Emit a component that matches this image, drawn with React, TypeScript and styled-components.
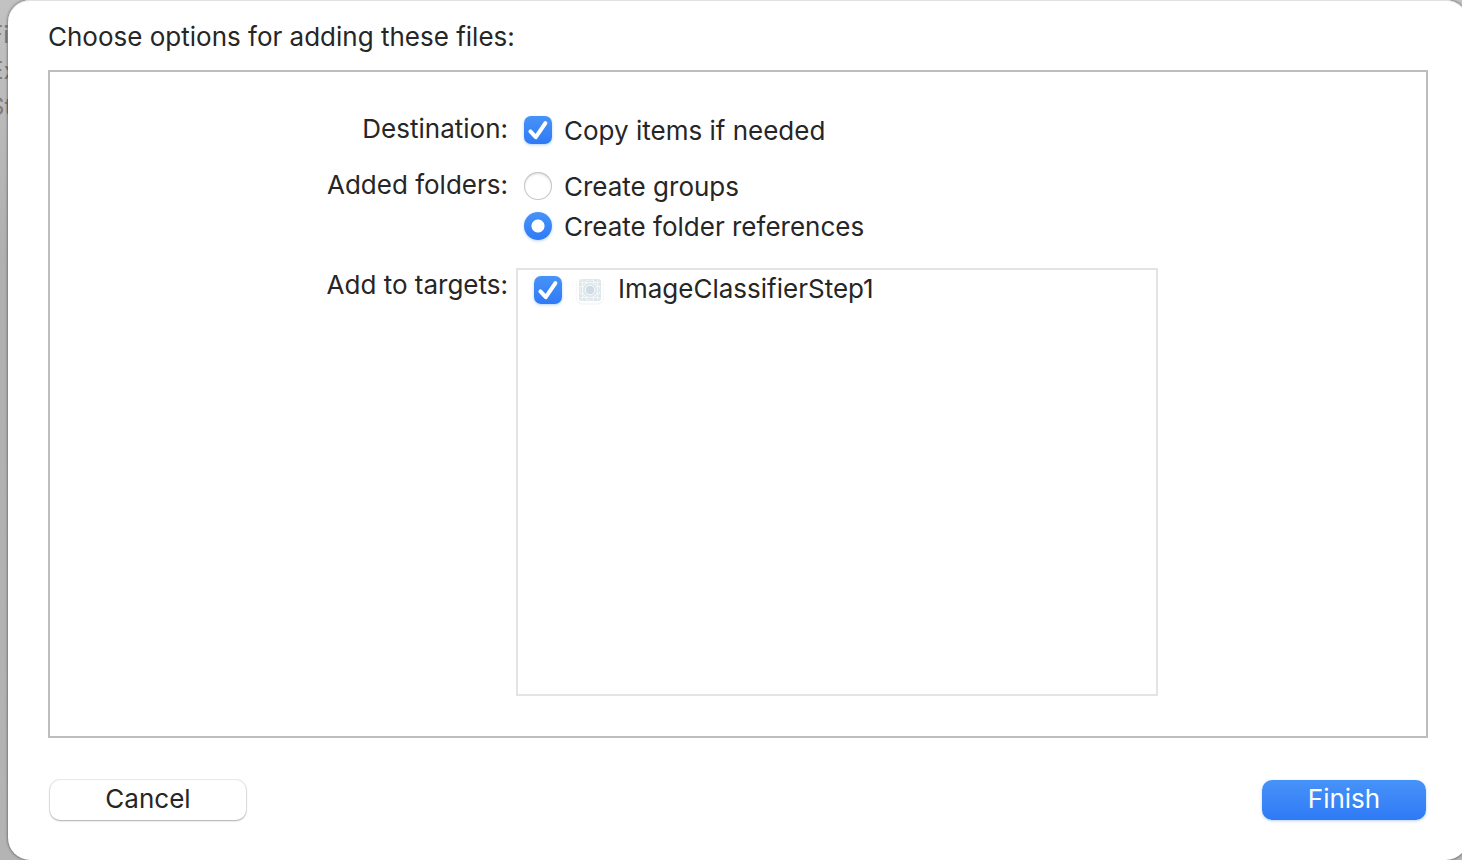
import React, { useState } from "react";
import styled, { createGlobalStyle, css } from "styled-components";

const GlobalStyle = createGlobalStyle`
  *, *::before, *::after { box-sizing: border-box; }
  body {
    margin: 0;
    background: #b4b4b4;
    color: #262626;
    font-family: Inter, "Liberation Sans", sans-serif;
    font-size: 26px;
    line-height: 32px;
  }
`;

const Screen = styled.div`
  position: relative;
  display: flex;
  min-height: 100vh;
  overflow: hidden;
  background: linear-gradient(#c2c2c2, #b0b0b0 30%, #b4b4b4);
`;

const Backdrop = styled.div`
  position: absolute;
  top: 19px;
  left: -11px;
  display: grid;
  gap: 4px;
  color: #7c7c7c;
  font-size: 24px;
`;

const Sheet = styled.form`
  position: relative;
  flex: 1;
  display: flex;
  flex-direction: column;
  margin: 0 -6px 0 8px;
  padding: 22px 40px 40px;
  border-radius: 22px;
  background: #fff;
  box-shadow: inset 0 1px 0 #e2e2e2, 0 0 3px rgba(0, 0, 0, 0.65);
`;

const Title = styled.h1`
  margin: 0 0 18px;
  font-size: 26px;
  font-weight: 400;
  line-height: 30px;
`;

const Panel = styled.div`
  flex: 1;
  display: grid;
  grid-template-columns: 458px minmax(0, 1fr);
  grid-template-rows: auto auto 1fr;
  row-gap: 24px;
  padding: 42px 268px 40px 0;
  border: 2px solid #bdbdbd;
`;

const RowLabel = styled.div<{ $list?: boolean }>`
  padding-top: ${(p) => (p.$list ? 4 : 0)}px;
  line-height: 30px;
  text-align: right;
`;

const Options = styled.div`
  display: grid;
  gap: 8px;
  padding-left: 16px;
`;

const Option = styled.label`
  display: flex;
  align-items: center;
  gap: 12px;
`;

const OptionText = styled.span`
  padding-top: 2px;
  line-height: 30px;
`;

const TargetName = styled.span`
  padding-bottom: 2px;
  line-height: 30px;
`;

const blueFill = css`
  background: linear-gradient(#4793f8, #2f7af5);
  box-shadow: 0 1px 3px rgba(47, 122, 245, 0.35);
`;

const CheckFrame = styled.span`
  display: grid;
  flex: none;
  width: 28px;
  height: 28px;

  & > * {
    grid-area: 1 / 1;
  }
`;

const CheckInput = styled.input`
  appearance: none;
  width: 28px;
  height: 28px;
  margin: 0;
  border-radius: 7px;
  background: #fff;
  box-shadow: inset 0 0 1px 1px #c8c8c8;

  &:checked {
    ${blueFill}
  }
  &:not(:checked) + svg {
    visibility: hidden;
  }
`;

const CheckMark = styled.svg`
  width: 28px;
  height: 28px;
  pointer-events: none;
`;

const Radio = styled.input`
  appearance: none;
  flex: none;
  width: 28px;
  height: 28px;
  margin: 0;
  border-radius: 50%;
  background: #fff;
  box-shadow: inset 0 0 0 1px #c6c6c6, inset 0 2px 3px rgba(0, 0, 0, 0.14);

  &:checked {
    background: radial-gradient(circle, #fff 0 6px, transparent 7px),
      linear-gradient(#4793f8, #2f7af5);
    box-shadow: 0 1px 3px rgba(47, 122, 245, 0.35);
  }
`;

const TargetList = styled.div`
  margin: 2px 0 0 8px;
  padding: 4px 16px;
  border: 2px solid #e4e4e4;
`;

const TargetIcon = styled.svg`
  flex: none;
  width: 32px;
  height: 32px;
`;

const Footer = styled.div`
  display: flex;
  justify-content: space-between;
  margin-top: 42px;
`;

const Button = styled.button<{ $primary?: boolean }>`
  width: ${(p) => (p.$primary ? 164 : 196)}px;
  height: 40px;
  margin: 0 2px;
  padding: 0 0 2px;
  border: 0;
  border-radius: 10px;
  color: ${(p) => (p.$primary ? "#fff" : "#262626")};
  font: inherit;
  ${(p) =>
    p.$primary
      ? blueFill
      : css`
          background: #fff;
          box-shadow: 0 0 0 1px rgba(0, 0, 0, 0.08), 0 1px 2px rgba(0, 0, 0, 0.26);
        `}
`;

function Checkbox() {
  const [checked, setChecked] = useState(true);
  return (
    <CheckFrame>
      <CheckInput
        type="checkbox"
        checked={checked}
        onChange={(e) => setChecked(e.target.checked)}
      />
      <CheckMark viewBox="0 0 28 28" fill="none" aria-hidden="true">
        <path
          d="M6.4 15.4 11.8 21.2 21.4 7.2"
          stroke="#fff"
          strokeWidth="4"
          strokeLinecap="round"
          strokeLinejoin="round"
        />
      </CheckMark>
    </CheckFrame>
  );
}

function AppIcon() {
  return (
    <TargetIcon viewBox="0 0 32 32" fill="none" aria-hidden="true">
      <rect x="2" y="3.5" width="28" height="27" rx="6.5" fill="#000" opacity="0.06" />
      <rect x="2.5" y="2.5" width="27" height="27" rx="6" fill="#fff" />
      <rect x="5" y="5" width="22" height="22" rx="3" fill="#dbe4e9" />
      <g stroke="#f3f7f9" strokeWidth="0.8">
        <path d="M5 8.5H27M5 23.5H27M8.5 5V27M23.5 5V27M12.5 5V10M19.5 5V10M12.5 22V27M19.5 22V27M5 12.5H10M5 19.5H10M22 12.5H27M22 19.5H27" />
        <path d="M5 5 11 11M27 5 21 11M5 27 11 21M27 27 21 21" opacity="0.6" />
        <circle cx="16" cy="16" r="10" />
        <circle cx="16" cy="16" r="7.6" strokeWidth="1.2" />
        <circle cx="16" cy="16" r="4.8" strokeWidth="1.2" />
      </g>
      <circle cx="16" cy="16" r="4" fill="#d0dce2" />
    </TargetIcon>
  );
}

export default function App() {
  const [mode, setMode] = useState("references");
  return (
    <Screen>
      <GlobalStyle />
      <Backdrop aria-hidden="true">
        <span>Fi</span>
        <span>Ex</span>
        <span>St</span>
      </Backdrop>
      <Sheet onSubmit={(e) => e.preventDefault()}>
        <Title>Choose options for adding these files:</Title>
        <Panel>
          <RowLabel id="destination">Destination:</RowLabel>
          <Options role="group" aria-labelledby="destination">
            <Option>
              <Checkbox />
              <OptionText>Copy items if needed</OptionText>
            </Option>
          </Options>
          <RowLabel id="folders">Added folders:</RowLabel>
          <Options role="radiogroup" aria-labelledby="folders">
            <Option>
              <Radio
                type="radio"
                name="folders"
                checked={mode === "groups"}
                onChange={() => setMode("groups")}
              />
              <OptionText>Create groups</OptionText>
            </Option>
            <Option>
              <Radio
                type="radio"
                name="folders"
                checked={mode === "references"}
                onChange={() => setMode("references")}
              />
              <OptionText>Create folder references</OptionText>
            </Option>
          </Options>
          <RowLabel id="targets" $list>
            Add to targets:
          </RowLabel>
          <TargetList role="group" aria-labelledby="targets">
            <Option>
              <Checkbox />
              <AppIcon />
              <TargetName>ImageClassifierStep1</TargetName>
            </Option>
          </TargetList>
        </Panel>
        <Footer>
          <Button type="button">Cancel</Button>
          <Button type="submit" $primary>
            Finish
          </Button>
        </Footer>
      </Sheet>
    </Screen>
  );
}
